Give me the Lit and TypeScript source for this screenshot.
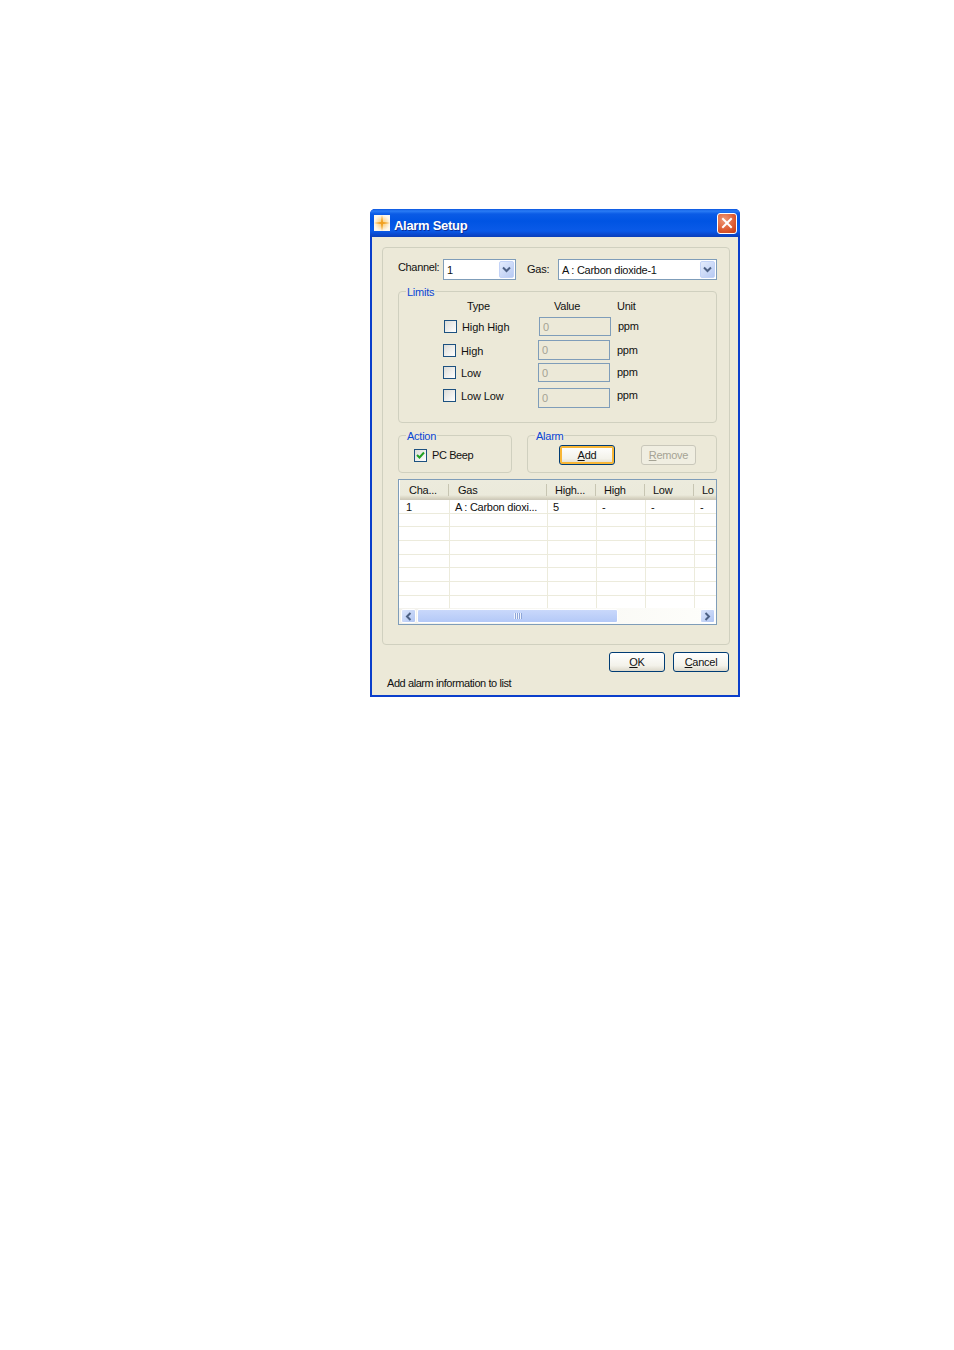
import { LitElement, html, css, svg } from "lit";
import { customElement } from "lit/decorators.js";

const chevron = svg`<svg width="9" height="7" viewBox="0 0 9 7"><path d="M1 1.5 L4.5 5 L8 1.5" fill="none" stroke="#4d6185" stroke-width="2"/></svg>`;

@customElement("app-root")
export class AppRoot extends LitElement {
  static styles = css`
    :host { display: block; width: 954px; height: 1350px; background: #fff; padding: 209px 0 0 370px; box-sizing: border-box; font: 11px/14px "Liberation Sans", Arial, sans-serif; letter-spacing: -0.25px; color: #111; }
    * { box-sizing: border-box; }
    .dialog { width: 370px; height: 488px; display: flex; flex-direction: column; border-radius: 5px 5px 0 0; overflow: hidden; background: #0a3ecb; }
    .title { height: 28px; flex: none; display: flex; align-items: center; padding: 1px 3px 0 4px; background: linear-gradient(#0a55e0 0, #2a7cf5 2px, #0a5be6 5px, #0054e3 12px, #0a5ae8 22px, #0a46c9 26px, #0a3fb8 28px); color: #fff; }
    .title svg.app { flex: none; margin-right: 4px; margin-top: -2px; }
    .title b { font: bold 13px "Liberation Sans", Arial, sans-serif; flex: 1; letter-spacing: -0.3px; text-shadow: 1px 1px #0a2f9a; padding-top: 3px; }
    .close { width: 20px; height: 21px; flex: none; border: 1px solid #fff; border-radius: 3px; background: radial-gradient(circle at 35% 30%, #ef9a7a, #dc5a30 60%, #c23a14); display: flex; align-items: center; justify-content: center; margin-top: -1px; }
    .body { flex: 1; margin: 0 2px 2px; background: #ece9d8; padding: 10px 8px 0 10px; display: flex; flex-direction: column; }
    .outer { width: 348px; height: 398px; flex: none; border: 1px solid #d0d0bf; border-radius: 4px; padding: 11px 12px 0 15px; }
    .top { display: flex; height: 21px; }
    .top .l1 { width: 45px; margin-top: 1px; white-space: nowrap; letter-spacing: -0.35px; }
    .top .l2 { width: 31px; margin-left: 11px; margin-top: 3px; }
    .combo { height: 21px; border: 1px solid #7f9db9; background: #fff; display: flex; align-items: center; padding: 1px 1px 0 3px; }
    .combo span { flex: 1; }
    .combo i { width: 15px; height: 17px; margin-top: -1px; background: linear-gradient(135deg, #e4ecfd, #b6c9f2); border: 1px solid #c3d3f7; border-radius: 2px; display: flex; align-items: center; justify-content: center; }
    .c1 { width: 73px; }
    .c2 { width: 159px; }
    .group { position: relative; border: 1px solid #d0d0bf; border-radius: 4px; }
    .legend { position: absolute; left: 7px; top: -6px; background: #ece9d8; padding: 0 1px; color: #0a46d5; line-height: 13px; }
    .limits { width: 319px; height: 132px; margin-top: 11px; padding: 6px 0 0 44px; }
    .head { display: flex; height: 16px; align-items: center; }
    .head .a { width: 24px; }
    .head .t { width: 87px; }
    .head .v { width: 63px; }
    .row { display: flex; align-items: center; }
    .r1 { height: 19px; margin-top: 3px; padding-left: 1px; }
    .r2 { height: 20px; margin-top: 4px; }
    .r3 { height: 19px; margin-top: 3px; }
    .r4 { height: 20px; margin-top: 6px; }
    .r4 > .check, .r4 > .lab, .r4 > .ppm { margin-bottom: 5px; }
    .check { width: 13px; height: 13px; flex: none; border: 1px solid #1c5180; background: linear-gradient(135deg, #dcdcd7, #fff); display: block; }
    .row .lab { width: 77px; margin-left: 5px; padding-top: 1px; letter-spacing: -0.1px; }
    .input { width: 72px; height: 100%; border: 1px solid #7f9db9; padding: 0 0 0 3px; color: #a5a394; display: flex; align-items: center; }
    .ppm { margin-left: 7px; margin-top: -1px; }
    .pair { display: flex; gap: 15px; margin-top: 12px; height: 38px; }
    .action { width: 114px; padding: 13px 0 0 15px; display: flex; align-items: flex-start; gap: 5px; }
    .action span:last-child { margin-top: -1px; letter-spacing: -0.4px; }
    .alarm { width: 190px; padding: 9px 0 0 31px; display: flex; gap: 26px; }
    .btn { width: 56px; height: 20px; flex: none; border: 1px solid #003c74; border-radius: 3px; background: linear-gradient(#fff, #f3f2ea 70%, #dcd8ca); display: flex; align-items: center; justify-content: center; }
    .btn u { text-decoration: underline; }
    .default { box-shadow: inset 0 0 0 2px #f8b636; }
    .off { width: 55px; border-color: #c9c7ba; background: #f0eee1; color: #a5a394; }
    .list { width: 319px; height: 146px; margin-top: 6px; border: 1px solid #7f9db9; background: #fff; display: flex; flex-direction: column; }
    .lhead { height: 20px; flex: none; display: grid; grid-template-columns: 49px 98px 49px 49px 49px 23px; background: linear-gradient(#ecebdd 0, #ebeadb 15px, #d8d4c2 18px, #cbc7b8 20px); margin-left: 1px; }
    .lhead div { padding: 3px 0 0 8px; overflow: hidden; white-space: nowrap; position: relative; }
    .lhead div:first-child, .lhead div:nth-child(2) { padding-left: 9px; }
    .lhead div::after { content: ""; position: absolute; right: 0; top: 4px; height: 12px; width: 1px; background: #c7c5b2; }
    .lhead div:last-child::after { display: none; }
    .rows { flex: 1; overflow: hidden; }
    .lrow { height: 13.7px; display: grid; grid-template-columns: 51px 98px 49px 49px 49px 21px; border-bottom: 1px solid #ecebdc; }
    .lrow div { padding: 1px 0 0 5px; border-right: 1px solid #ecebdc; white-space: nowrap; overflow: hidden; line-height: 12px; }
    .lrow div:first-child { padding-left: 7px; }
    .lrow div:last-child { border-right: 0; }
    .sb { height: 16px; flex: none; display: flex; align-items: center; padding: 0 1px 0 2px; background: linear-gradient(90deg, #f3f2ec, #fefefb); }
    .arrow { width: 15px; height: 14px; flex: none; background: linear-gradient(135deg, #dbe5fc, #b0c5f2); border: 1px solid #fff; border-radius: 2px; display: flex; align-items: center; justify-content: center; }
    .thumb { width: 201px; height: 14px; margin-left: 1px; border: 1px solid #fff; border-radius: 2px; background: linear-gradient(#c9d8fb, #b4c9f7); display: flex; align-items: center; justify-content: center; }
    .grip { width: 8px; height: 6px; background: repeating-linear-gradient(90deg, #eef3fe 0 1px, #8ea6d8 1px 2px); }
    .spacer { flex: 1; }
    .foot { display: flex; justify-content: flex-end; gap: 8px; margin-top: 7px; padding-right: 1px; }
    .status { margin: 4px 0 0 5px; letter-spacing: -0.42px; }
  `;

  render() {
    const rows = [["1", "A : Carbon dioxi...", "5", "-", "-", "-"], [], [], [], [], [], [], []];
    const limits = [["High High", "r1"], ["High", "r2"], ["Low", "r3"], ["Low Low", "r4"]];
    return html`
      <div class="dialog">
        <div class="title">
          <svg class="app" width="16" height="16" viewBox="0 0 16 16">
            <defs><radialGradient id="glow"><stop offset="0" stop-color="#f9c66a"/><stop offset="1" stop-color="#fdf8ec"/></radialGradient></defs>
            <rect width="16" height="16" fill="url(#glow)"/>
            <path d="M8 0 L9 7 L16 8 L9 9 L8 16 L7 9 L0 8 L7 7 Z" fill="#f0a020"/>
          </svg>
          <b>Alarm Setup</b>
          <div class="close">
            <svg width="12" height="12" viewBox="0 0 12 12"><path d="M2 2 L10 10 M10 2 L2 10" stroke="#fff" stroke-width="2" stroke-linecap="square"/></svg>
          </div>
        </div>
        <div class="body">
          <div class="outer">
            <div class="top">
              <span class="l1">Channel:</span>
              <div class="combo c1"><span>1</span><i>${chevron}</i></div>
              <span class="l2">Gas:</span>
              <div class="combo c2"><span>A : Carbon dioxide-1</span><i>${chevron}</i></div>
            </div>
            <div class="group limits">
              <span class="legend">Limits</span>
              <div class="head"><span class="a"></span><span class="t">Type</span><span class="v">Value</span><span>Unit</span></div>
              ${limits.map(([name, cls]) => html`
                <div class="row ${cls}">
                  <span class="check"></span>
                  <span class="lab">${name}</span>
                  <span class="input">0</span>
                  <span class="ppm">ppm</span>
                </div>`)}
            </div>
            <div class="pair">
              <div class="group action">
                <span class="legend">Action</span>
                <svg class="check" width="13" height="13" viewBox="0 0 11 11"><path d="M2 5 L4.5 7.5 L9 2.5" fill="none" stroke="#21a121" stroke-width="2"/></svg>
                <span>PC Beep</span>
              </div>
              <div class="group alarm">
                <span class="legend">Alarm</span>
                <div class="btn default"><span><u>A</u>dd</span></div>
                <div class="btn off"><span><u>R</u>emove</span></div>
              </div>
            </div>
            <div class="list">
              <div class="lhead">
                ${["Cha...", "Gas", "High...", "High", "Low", "Lo"].map((h) => html`<div>${h}</div>`)}
              </div>
              <div class="rows">
                ${rows.map((r) => html`<div class="lrow">${[0, 1, 2, 3, 4, 5].map((i) => html`<div>${r[i] ?? ""}</div>`)}</div>`)}
              </div>
              <div class="sb">
                <div class="arrow"><svg width="7" height="9" viewBox="0 0 7 9"><path d="M5.5 1 L2 4.5 L5.5 8" fill="none" stroke="#4d6185" stroke-width="2"/></svg></div>
                <div class="thumb"><div class="grip"></div></div>
                <div class="spacer"></div>
                <div class="arrow"><svg width="7" height="9" viewBox="0 0 7 9"><path d="M1.5 1 L5 4.5 L1.5 8" fill="none" stroke="#4d6185" stroke-width="2"/></svg></div>
              </div>
            </div>
          </div>
          <div class="foot">
            <div class="btn"><span><u>O</u>K</span></div>
            <div class="btn"><span><u>C</u>ancel</span></div>
          </div>
          <div class="status">Add alarm information to list</div>
        </div>
      </div>
    `;
  }
}
